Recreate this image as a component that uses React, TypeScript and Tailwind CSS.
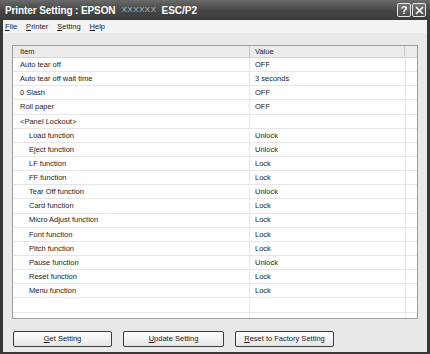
const settings = [
  { item: 'Auto tear off', value: 'OFF' },
  { item: 'Auto tear off wait time', value: '3 seconds' },
  { item: '0 Slash', value: 'OFF' },
  { item: 'Roll paper', value: 'OFF' },
  { item: '<Panel Lockout>', value: '' },
  { item: 'Load function', value: 'Unlock', sub: true },
  { item: 'Eject function', value: 'Unlock', sub: true },
  { item: 'LF function', value: 'Lock', sub: true },
  { item: 'FF function', value: 'Lock', sub: true },
  { item: 'Tear Off function', value: 'Unlock', sub: true },
  { item: 'Card function', value: 'Lock', sub: true },
  { item: 'Micro Adjust function', value: 'Lock', sub: true },
  { item: 'Font function', value: 'Lock', sub: true },
  { item: 'Pitch function', value: 'Lock', sub: true },
  { item: 'Pause function', value: 'Unlock', sub: true },
  { item: 'Reset function', value: 'Lock', sub: true },
  { item: 'Menu function', value: 'Lock', sub: true },
  { item: '', value: '' },
  { item: '', value: '' },
]

const menus = [
  { key: 'F', rest: 'ile' },
  { key: 'P', rest: 'rinter' },
  { key: 'S', rest: 'etting' },
  { key: 'H', rest: 'elp' },
]

const buttons = [
  { key: 'G', rest: 'et Setting', w: 'w-[99px]' },
  { key: 'U', rest: 'pdate Setting', w: 'w-[101px]' },
  { key: 'R', rest: 'eset to Factory Setting', w: 'w-[99px]' },
]

function TitleButton({ children }: { children: React.ReactNode }) {
  return (
    <div className="w-[14px] h-[14px] rounded-[2px] border border-[#e6e6e6] bg-gradient-to-b from-[#777] to-[#4a4a4a] flex items-center justify-center text-white">
      {children}
    </div>
  )
}

export default function App() {
  return (
    <div className="w-[430px] h-[354px] flex flex-col bg-[#383838] text-[#1c1c1c] overflow-hidden" style={{ fontFamily: '"Liberation Sans", Arial, sans-serif' }}>
      <div className="h-[20px] shrink-0 flex items-center pl-[5px] pr-[4px] bg-gradient-to-b from-[#6a6a6a] via-[#474747] to-[#3a3a3a]">
        <span className="text-white font-bold text-[10px] tracking-[-0.1px]">Printer Setting : EPSON</span>
        <span className="ml-[6px] text-[#b9b9b9] text-[8px] tracking-[0.5px]">XXXXXX</span>
        <span className="ml-[5px] text-white font-bold text-[10px]">ESC/P2</span>
        <div className="ml-auto flex gap-[1px]">
          <TitleButton>
            <span className="text-[11px] leading-none font-bold">?</span>
          </TitleButton>
          <TitleButton>
            <svg width="9" height="9" viewBox="0 0 9 9">
              <path d="M1 1 L8 8 M8 1 L1 8" stroke="white" strokeWidth="1.6" />
            </svg>
          </TitleButton>
        </div>
      </div>

      <div className="flex-1 mx-[3px] mb-[2px] bg-[#e9e9e9] flex flex-col">
        <div className="h-[13px] shrink-0 bg-[#f3f3f3] flex items-center gap-[9px] pl-[2px] text-[7.5px]">
          {menus.map(m => (
            <span key={m.key}><span className="underline">{m.key}</span>{m.rest}</span>
          ))}
        </div>

        <div className="ml-[9px] mt-[12px] w-[406px] h-[274px] border border-[#9d9d9d] bg-white overflow-hidden flex flex-col text-[7.5px]">
          <div className="h-[12px] shrink-0 flex bg-[#ebebeb] border-b border-[#d4d4d4]">
            <div className="w-[237px] pl-[7px] flex items-center border-r border-[#c9c9c9]">Item</div>
            <div className="w-[155px] pl-[5px] flex items-center border-r border-[#c9c9c9]">Value</div>
            <div className="flex-1"></div>
          </div>
          {settings.map((s, i) => (
            <div key={i} className="h-[14.15px] shrink-0 flex border-b border-[#e6e6e6]">
              <div className={`w-[237px] flex items-center border-r border-[#e6e6e6] ${s.sub ? 'pl-[16px]' : 'pl-[7px]'}`}>{s.item}</div>
              <div className="w-[156px] pl-[5px] flex items-center border-r border-[#e6e6e6]">{s.value}</div>
              <div className="flex-1"></div>
            </div>
          ))}
        </div>

        <div className="mt-[12px] ml-[10px] flex gap-[11px]">
          {buttons.map(b => (
            <div key={b.key} className={`${b.w} h-[16px] rounded-[2px] border border-[#3c3c3c] bg-gradient-to-b from-white to-[#e6e6e6] flex items-center justify-center text-[7.5px]`}>
              <span><span className="underline">{b.key}</span>{b.rest}</span>
            </div>
          ))}
        </div>
      </div>
    </div>
  )
}
